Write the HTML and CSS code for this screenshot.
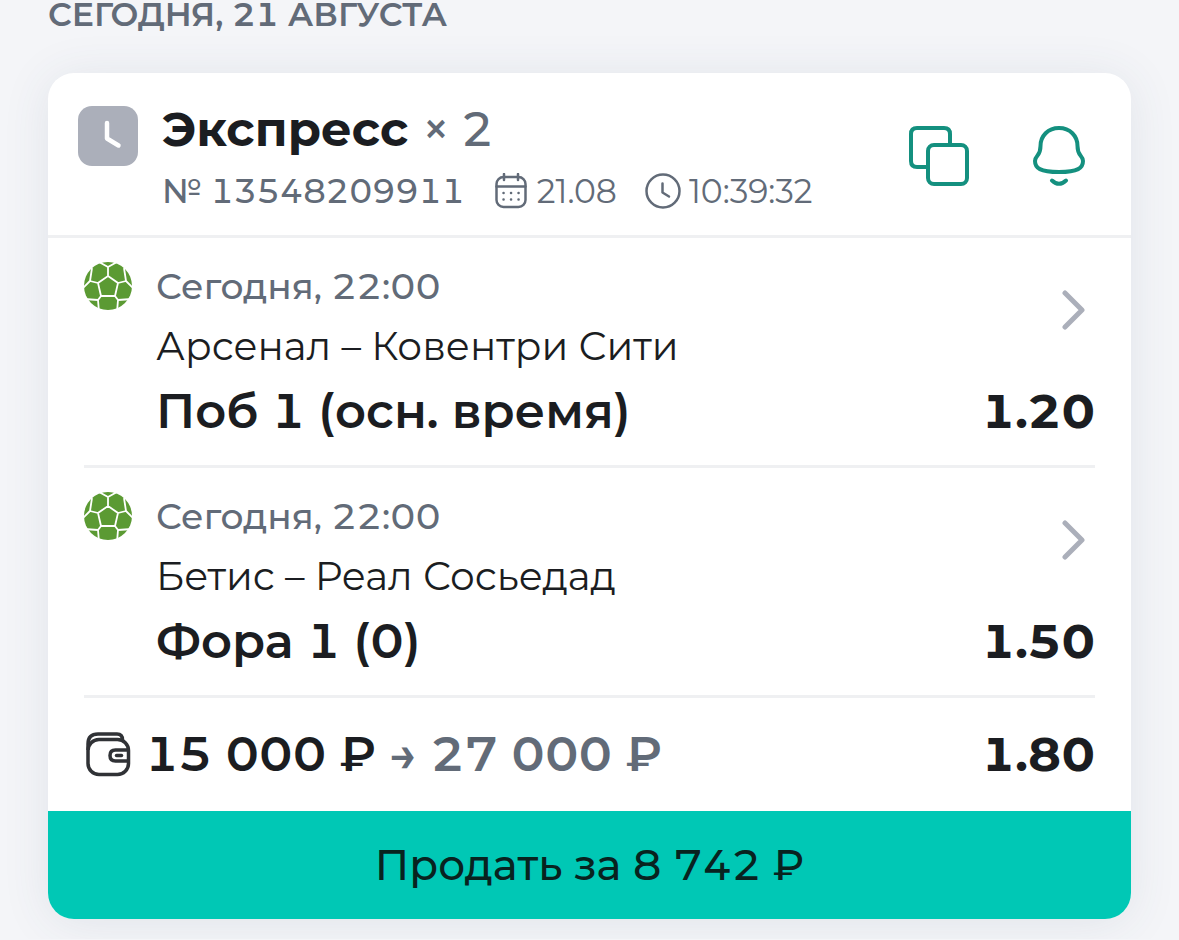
FILE: index.html
```
<!DOCTYPE html>
<html lang="ru">
<head>
    <meta charset="UTF-8">
    <meta name="viewport" content="width=device-width, initial-scale=1.0">
    <title>История ставок</title>
    <link rel="stylesheet" href="styles.css">
</head>
<body>
    <svg class="sprite" aria-hidden="true">
        <symbol id="ball" viewBox="0 0 48 48">
            <circle cx="24" cy="24" r="24" fill="#5b9a33"/>
            <path d="M24 14L34 21L31 34H17L14 21ZM24 14V5M34 21L42 19M31 34L34 38M17 34L14 38M14 21L6 19M15 0L24 5L33 0M42 19L40 6M42 19L50 27M34 38L33 50M34 38L48 37M14 38L15 50M14 38L0 37M6 19L-2 27M6 19L8 6" fill="none" stroke="#fff" stroke-width="1.8"/>
        </symbol>
        <symbol id="chevron" viewBox="0 0 24 40">
            <path d="M3 3L20 20L3 37" fill="none" stroke="#abafba" stroke-width="5" stroke-linecap="round" stroke-linejoin="round"/>
        </symbol>
    </svg>

    <main class="history">
        <h2 class="day">СЕГОДНЯ, 21 АВГУСТА</h2>

        <article class="card">
            <header class="card-header">
                <svg class="status" viewBox="0 0 60 60" role="img" aria-label="В игре">
                    <rect width="60" height="60" rx="14" fill="#abafba"/>
                    <path d="M29 17V32.500L40.500 39.500" fill="none" stroke="#fff" stroke-width="4.500" stroke-linecap="round" stroke-linejoin="round"/>
                </svg>
                <div class="summary">
                    <h3 class="title">Экспресс <span class="times">×</span> <span class="count">2</span></h3>
                    <div class="meta">
                        <span class="number">№ 13548209911</span>
                        <span class="stamp">
                            <svg class="meta-icon" viewBox="0 0 36 36" fill="none" stroke="#626b78" stroke-width="2.5" stroke-linecap="round">
                                <rect x="3.500" y="4" width="29" height="30" rx="7"/>
                                <path d="M3.500 13.500H32.500M11 1V7M25 1V7"/>
                                <path d="M10.500 20h.1M18 20h.1M25.500 20h.1M10.500 26.500h.1M18 26.500h.1M25.500 26.500h.1"/>
                            </svg>
                            21.08
                        </span>
                        <span class="stamp">
                            <svg class="meta-icon" viewBox="0 0 36 36" fill="none" stroke="#626b78" stroke-width="2.5" stroke-linecap="round" stroke-linejoin="round">
                                <circle cx="18" cy="18" r="16.5"/>
                                <path d="M17.500 10.500V19.500L24 23.500"/>
                            </svg>
                            10:39:32
                        </span>
                    </div>
                </div>
                <div class="actions">
                    <button class="icon-button" type="button" aria-label="Скопировать">
                        <svg viewBox="0 0 60 60" fill="none" stroke="#14907f" stroke-width="4">
                            <path d="M18 41H8Q2 41 2 35V8Q2 2 8 2H35Q41 2 41 8V18"/>
                            <rect x="19" y="19" width="39" height="39" rx="6"/>
                        </svg>
                    </button>
                    <button class="icon-button" type="button" aria-label="Уведомления">
                        <svg viewBox="0 0 60 60" fill="none" stroke="#14907f" stroke-width="4" stroke-linecap="round" stroke-linejoin="round">
                            <path d="M30 2C19 2 11.500 10 11.500 20C11.500 25 11 26.500 8.500 29.500C6 32.500 6 34 6 35C6 42 11 46 30 46C49 46 54 42 54 35C54 34 54 32.500 51.500 29.500C49 26.500 48.500 25 48.500 20C48.500 10 41 2 30 2Z"/>
                            <path d="M23 54.500Q30 61 37 54.500"/>
                        </svg>
                    </button>
                </div>
            </header>

            <section class="event">
                <svg class="ball"><use href="#ball"/></svg>
                <div class="event-body">
                    <p class="event-time">Сегодня, 22:00</p>
                    <p class="teams">Арсенал – Ковентри Сити</p>
                    <p class="pick">Поб 1 (осн. время)</p>
                </div>
                <div class="event-side">
                    <svg class="chevron"><use href="#chevron"/></svg>
                    <span class="odds">1.20</span>
                </div>
            </section>

            <section class="event">
                <svg class="ball"><use href="#ball"/></svg>
                <div class="event-body">
                    <p class="event-time">Сегодня, 22:00</p>
                    <p class="teams">Бетис – Реал Сосьедад</p>
                    <p class="pick">Фора 1 (0)</p>
                </div>
                <div class="event-side">
                    <svg class="chevron"><use href="#chevron"/></svg>
                    <span class="odds">1.50</span>
                </div>
            </section>

            <div class="total">
                <svg class="wallet" viewBox="0 0 48 48" fill="none" stroke="#303236" stroke-width="3.500">
                    <rect x="4" y="9.500" width="40.500" height="35" rx="11"/>
                    <path d="M4 20V14Q4 4 14 4H33Q38.500 4 38.500 10"/>
                    <path d="M44.500 20H31.500Q26 20 26 25.500Q26 31 31.500 31H44.500"/>
                    <path d="M32.500 25.500H37.500" stroke-linecap="round"/>
                </svg>
                <span class="stake">15 000 ₽</span>
                <span class="arrow">→</span>
                <span class="win">27 000 ₽</span>
                <span class="odds">1.80</span>
            </div>

            <button class="sell" type="button">Продать за 8 742 ₽</button>
        </article>
    </main>
</body>
</html>
```

FILE: styles.css
```
* {
    box-sizing: border-box;
}
body {
    margin: 0;
    font-family: Montserrat, "Open Sans", sans-serif;
    font-variant-numeric: tabular-nums;
    color: #1b1d21;
    background: #f4f5f8;
}
p, h2, h3 {
    margin: 0;
}
button {
    border: 0;
    padding: 0;
    font: inherit;
    font-variant-numeric: inherit;
    color: inherit;
    cursor: pointer;
}
.sprite {
    display: none;
}
.history {
    padding: 0 48px 20px;
}
.day {
    font-size: 33px;
    font-weight: 600;
    line-height: 28px;
    color: #626b78;
}
.card {
    margin-top: 45px;
    border-radius: 26px;
    background: #fff;
    box-shadow: 0 4px 48px rgba(60, 75, 110, 0.1);
    overflow: hidden;
}
.card-header {
    display: flex;
    gap: 24px;
    padding: 26px 42px 22px 30px;
    border-bottom: 3px solid #eff0f2;
}
.status {
    width: 60px;
    height: 60px;
    margin-top: 7px;
}
.summary {
    flex: 1;
}
.title {
    font-size: 48px;
    font-weight: 700;
    line-height: 60px;
}
.times, .count {
    font-weight: 500;
    font-variant-numeric: normal;
    color: #626b78;
}
.meta {
    display: flex;
    align-items: center;
    gap: 28px;
    margin-top: 10px;
    font-size: 33px;
    line-height: 44px;
    color: #626b78;
}
.number {
    font-weight: 500;
}
.stamp {
    display: flex;
    align-items: center;
    gap: 8px;
    font-variant-numeric: normal;
}
.meta-icon {
    width: 36px;
    height: 36px;
}
.actions {
    display: flex;
    align-items: center;
    gap: 60px;
}
.icon-button {
    background: none;
}
.icon-button svg {
    display: block;
    width: 60px;
    height: 60px;
}
.event {
    display: flex;
    gap: 24px;
    margin: 0 36px;
    padding: 24px 0;
    border-bottom: 3px solid #eff0f2;
}
.ball {
    width: 48px;
    height: 48px;
}
.event-body {
    flex: 1;
}
.event-time {
    font-size: 36px;
    font-weight: 500;
    line-height: 48px;
    color: #626b78;
}
.teams {
    margin-top: 9px;
    font-size: 39px;
    line-height: 54px;
}
.pick {
    margin-top: 8px;
    font-size: 48px;
    font-weight: 600;
    line-height: 60px;
}
.event-side {
    display: flex;
    flex-direction: column;
    align-items: flex-end;
    justify-content: space-between;
}
.chevron {
    width: 24px;
    height: 40px;
    margin: 28px 9px 0 0;
}
.odds {
    font-size: 48px;
    font-weight: 700;
    line-height: 60px;
}
.total {
    display: flex;
    align-items: center;
    gap: 13px;
    margin: 0 36px;
    padding: 26px 0 27px;
    font-size: 48px;
    font-weight: 600;
    line-height: 60px;
}
.total .odds {
    margin-left: auto;
}
.wallet {
    width: 48px;
    height: 48px;
}
.arrow, .win {
    color: #626b78;
}
.sell {
    display: block;
    width: 100%;
    padding: 24px;
    font-size: 42px;
    font-weight: 500;
    line-height: 60px;
    color: #08231f;
    background: #00c8b5;
}
```
